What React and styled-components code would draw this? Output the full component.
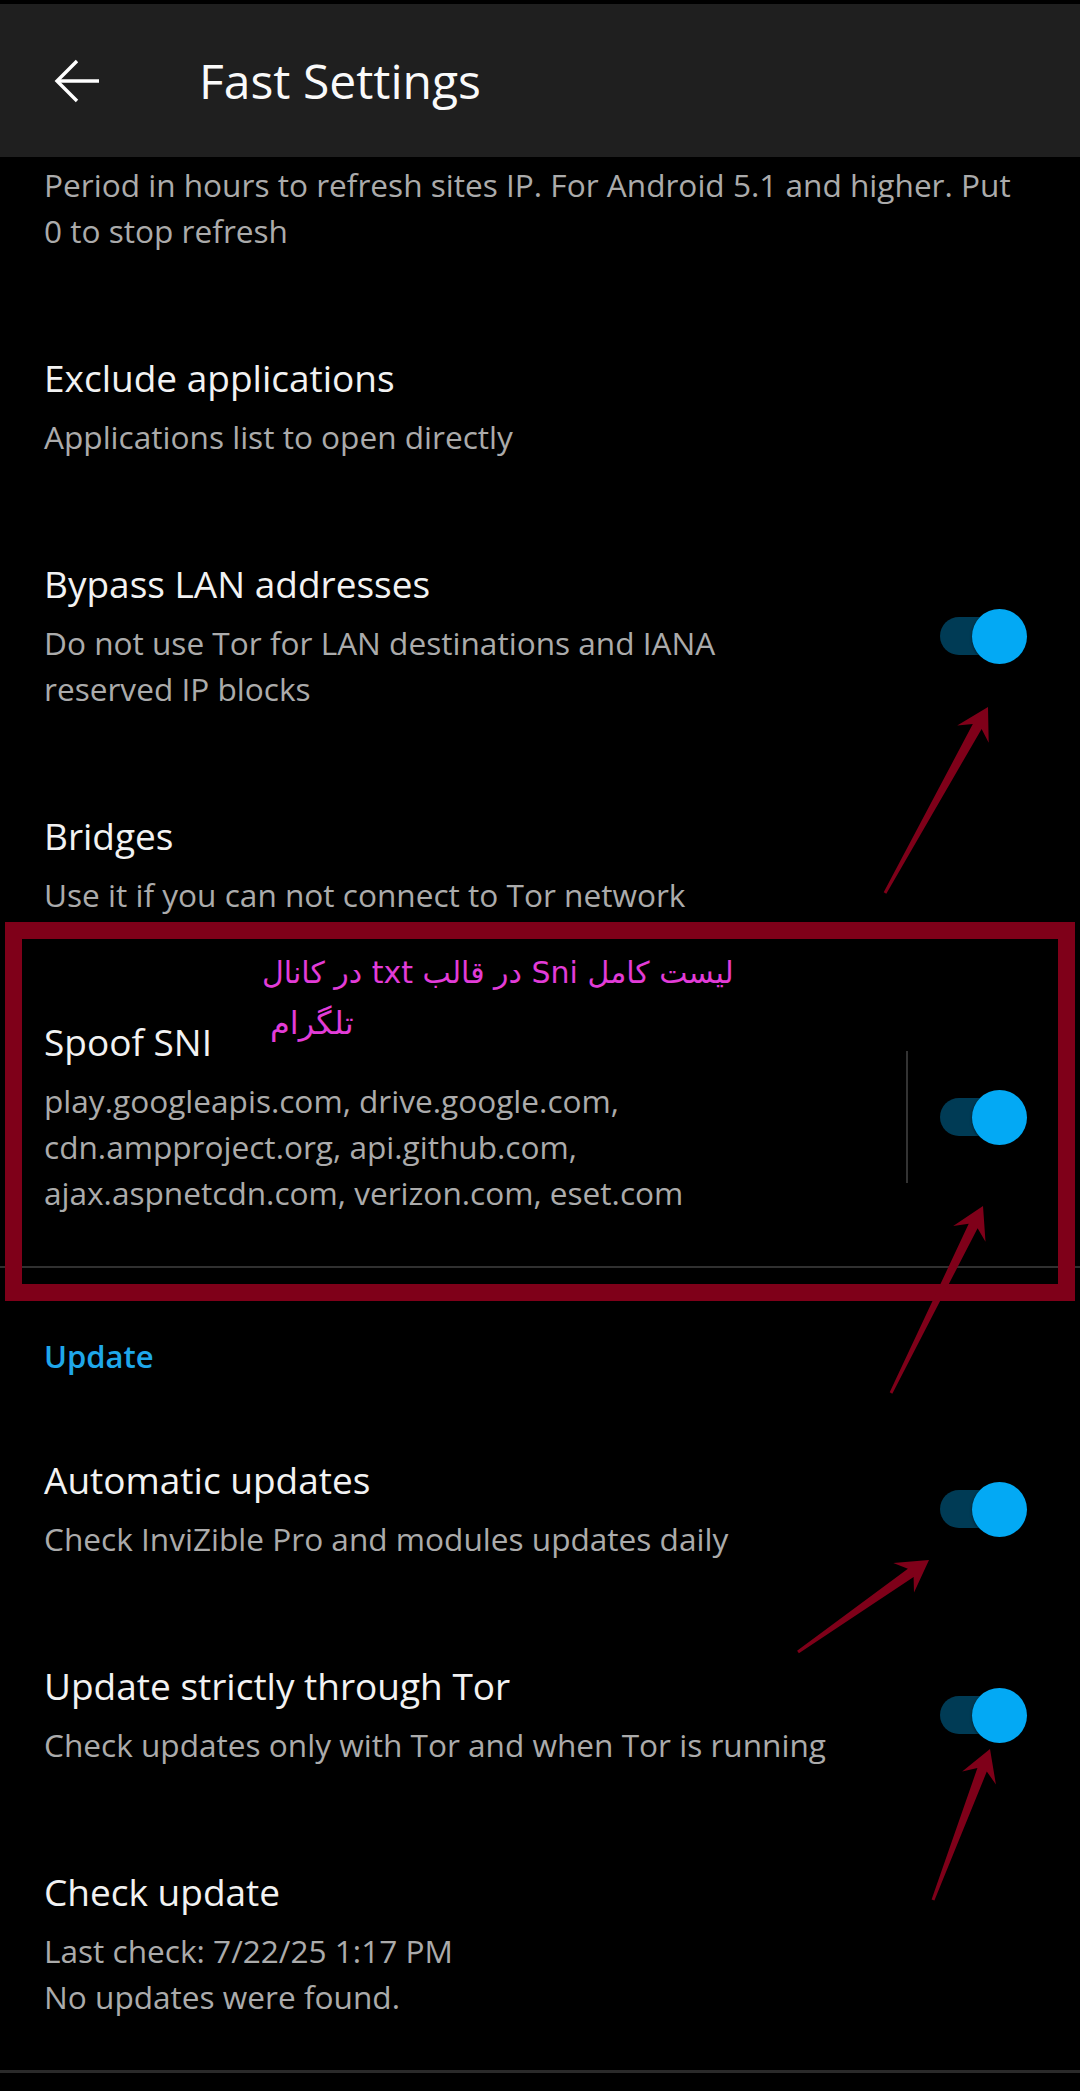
import React from 'react';
import styled, { createGlobalStyle } from 'styled-components';

const GlobalStyle = createGlobalStyle`
  html, body {
    margin: 0;
    padding: 0;
    background: #000;
  }
  body {
    font-family: "Open Sans", Lato, sans-serif;
    -webkit-font-smoothing: antialiased;
  }
`;

const Screen = styled.div`
  position: relative;
  width: 1080px;
  height: 2091px;
  box-sizing: border-box;
  padding-top: 4px;
  overflow: hidden;
  background: #000;
`;

const Toolbar = styled.header`
  display: flex;
  align-items: center;
  height: 153px;
  padding-left: 54px;
  background: #1f1f1f;
`;

const BackIcon = styled.svg`
  width: 46px;
  height: 44px;
  flex-shrink: 0;
`;

const ToolbarTitle = styled.h1`
  margin: 0 0 0 99px;
  font-size: 48px;
  font-weight: 400;
  color: #fafafa;
`;

const Pref = styled.div`
  display: flex;
  align-items: center;
  padding: ${p => (p.$cut ? '5px' : '50px')} 53px 50px 44px;
`;

const TextCol = styled.div`
  flex: 1;
  min-width: 0;
`;

const Title = styled.div`
  font-size: 37px;
  line-height: 48px;
  color: #f2f2f2;
  margin-bottom: 12px;
`;

const Summary = styled.div`
  font-size: 31.6px;
  line-height: 46px;
  color: #ababab;
`;

const WidgetSep = styled.div`
  width: 2px;
  height: 132px;
  margin-right: 32px;
  background: #333;
`;

const Track = styled.div`
  display: flex;
  align-items: center;
  justify-content: flex-end;
  width: 80px;
  height: 38px;
  margin-right: 7px;
  border-radius: 19px;
  background: #003b55;
`;

const Thumb = styled.div`
  width: 55px;
  height: 55px;
  flex-shrink: 0;
  margin-right: -7px;
  border-radius: 50%;
  background: #03a9f4;
  box-shadow: 0 1px 3px rgba(0, 0, 0, 0.5);
`;

const Divider = styled.div`
  height: ${p => p.$thick || 2}px;
  background: ${p => p.$color || '#303030'};
`;

const Category = styled.div`
  padding: 68px 44px 30px;
  font-size: 31px;
  line-height: 40px;
  font-weight: 600;
  color: #1fa7ea;
`;

const RedFrame = styled.div`
  position: absolute;
  left: 5px;
  top: 922px;
  width: 1070px;
  height: 379px;
  box-sizing: border-box;
  border: 17px solid #7f0019;
  pointer-events: none;
`;

const Note = styled.div`
  position: absolute;
  left: 262px;
  top: 948px;
  direction: rtl;
  text-align: left;
  font-family: "DejaVu Sans", sans-serif;
  line-height: 50px;
  color: #e23cd8;
`;

const NoteLine = styled.div`
  padding-left: ${p => p.$indent || 0}px;
  font-size: ${p => p.$size || 30}px;
`;

const ArrowLayer = styled.svg`
  position: absolute;
  left: 0;
  top: 0;
  width: 1080px;
  height: 2091px;
  pointer-events: none;
`;

function Switch() {
  return (
    <Track>
      <Thumb />
    </Track>
  );
}

function arrowPoints([x0, y0], [x1, y1]) {
  const len = Math.hypot(x1 - x0, y1 - y0);
  const dx = (x1 - x0) / len;
  const dy = (y1 - y0) / len;
  const nx = -dy;
  const ny = dx;
  const H = 31;
  const W = 18;
  const bx = x1 - dx * H;
  const by = y1 - dy * H;
  const sx = x1 - dx * H * 0.72;
  const sy = y1 - dy * H * 0.72;
  const pts = [
    [x0 + nx * 1.5, y0 + ny * 1.5],
    [sx + nx * 5, sy + ny * 5],
    [bx + nx * W, by + ny * W],
    [x1, y1],
    [bx - nx * W, by - ny * W],
    [sx - nx * 5, sy - ny * 5],
    [x0 - nx * 1.5, y0 - ny * 1.5],
  ];
  return pts.map(p => p.map(v => v.toFixed(1)).join(',')).join(' ');
}

const arrows = [
  [[885, 893], [988, 707]],
  [[891, 1393], [983, 1206]],
  [[798, 1652], [929, 1560]],
  [[933, 1900], [990, 1749]],
];

export default function App() {
  return (
    <>
      <GlobalStyle />
      <Screen>
        <Toolbar>
          <BackIcon viewBox="0 0 46 44" fill="none" stroke="#fff" strokeWidth="3.4">
            <path d="M45 22H3" />
            <path d="M23 2L3 22l20 20" />
          </BackIcon>
          <ToolbarTitle>Fast Settings</ToolbarTitle>
        </Toolbar>

        <Pref $cut>
          <TextCol>
            <Summary>
              Period in hours to refresh sites IP. For Android 5.1 and higher. Put
              <br />0 to stop refresh
            </Summary>
          </TextCol>
        </Pref>

        <Pref>
          <TextCol>
            <Title>Exclude applications</Title>
            <Summary>Applications list to open directly</Summary>
          </TextCol>
        </Pref>

        <Pref>
          <TextCol>
            <Title>Bypass LAN addresses</Title>
            <Summary>
              Do not use Tor for LAN destinations and IANA
              <br />reserved IP blocks
            </Summary>
          </TextCol>
          <Switch />
        </Pref>

        <Pref>
          <TextCol>
            <Title>Bridges</Title>
            <Summary>Use it if you can not connect to Tor network</Summary>
          </TextCol>
        </Pref>

        <Pref>
          <TextCol>
            <Title>Spoof SNI</Title>
            <Summary>
              play.googleapis.com, drive.google.com,
              <br />cdn.ampproject.org, api.github.com,
              <br />ajax.aspnetcdn.com, verizon.com, eset.com
            </Summary>
          </TextCol>
          <WidgetSep />
          <Switch />
        </Pref>

        <Divider />

        <Category>Update</Category>

        <Pref>
          <TextCol>
            <Title>Automatic updates</Title>
            <Summary>Check InviZible Pro and modules updates daily</Summary>
          </TextCol>
          <Switch />
        </Pref>

        <Pref>
          <TextCol>
            <Title>Update strictly through Tor</Title>
            <Summary>Check updates only with Tor and when Tor is running</Summary>
          </TextCol>
          <Switch />
        </Pref>

        <Pref>
          <TextCol>
            <Title>Check update</Title>
            <Summary>
              Last check: 7/22/25 1:17 PM
              <br />No updates were found.
            </Summary>
          </TextCol>
        </Pref>

        <Divider $thick={3} $color="#2a2a2a" />

        <RedFrame />
        <Note>
          <NoteLine>لیست کامل Sni در قالب txt در کانال</NoteLine>
          <NoteLine $indent={8} $size={32}>تلگرام</NoteLine>
        </Note>
        <ArrowLayer viewBox="0 0 1080 2091">
          {arrows.map(([from, to], i) => (
            <polygon key={i} points={arrowPoints(from, to)} fill="#7f0019" />
          ))}
        </ArrowLayer>
      </Screen>
    </>
  );
}
